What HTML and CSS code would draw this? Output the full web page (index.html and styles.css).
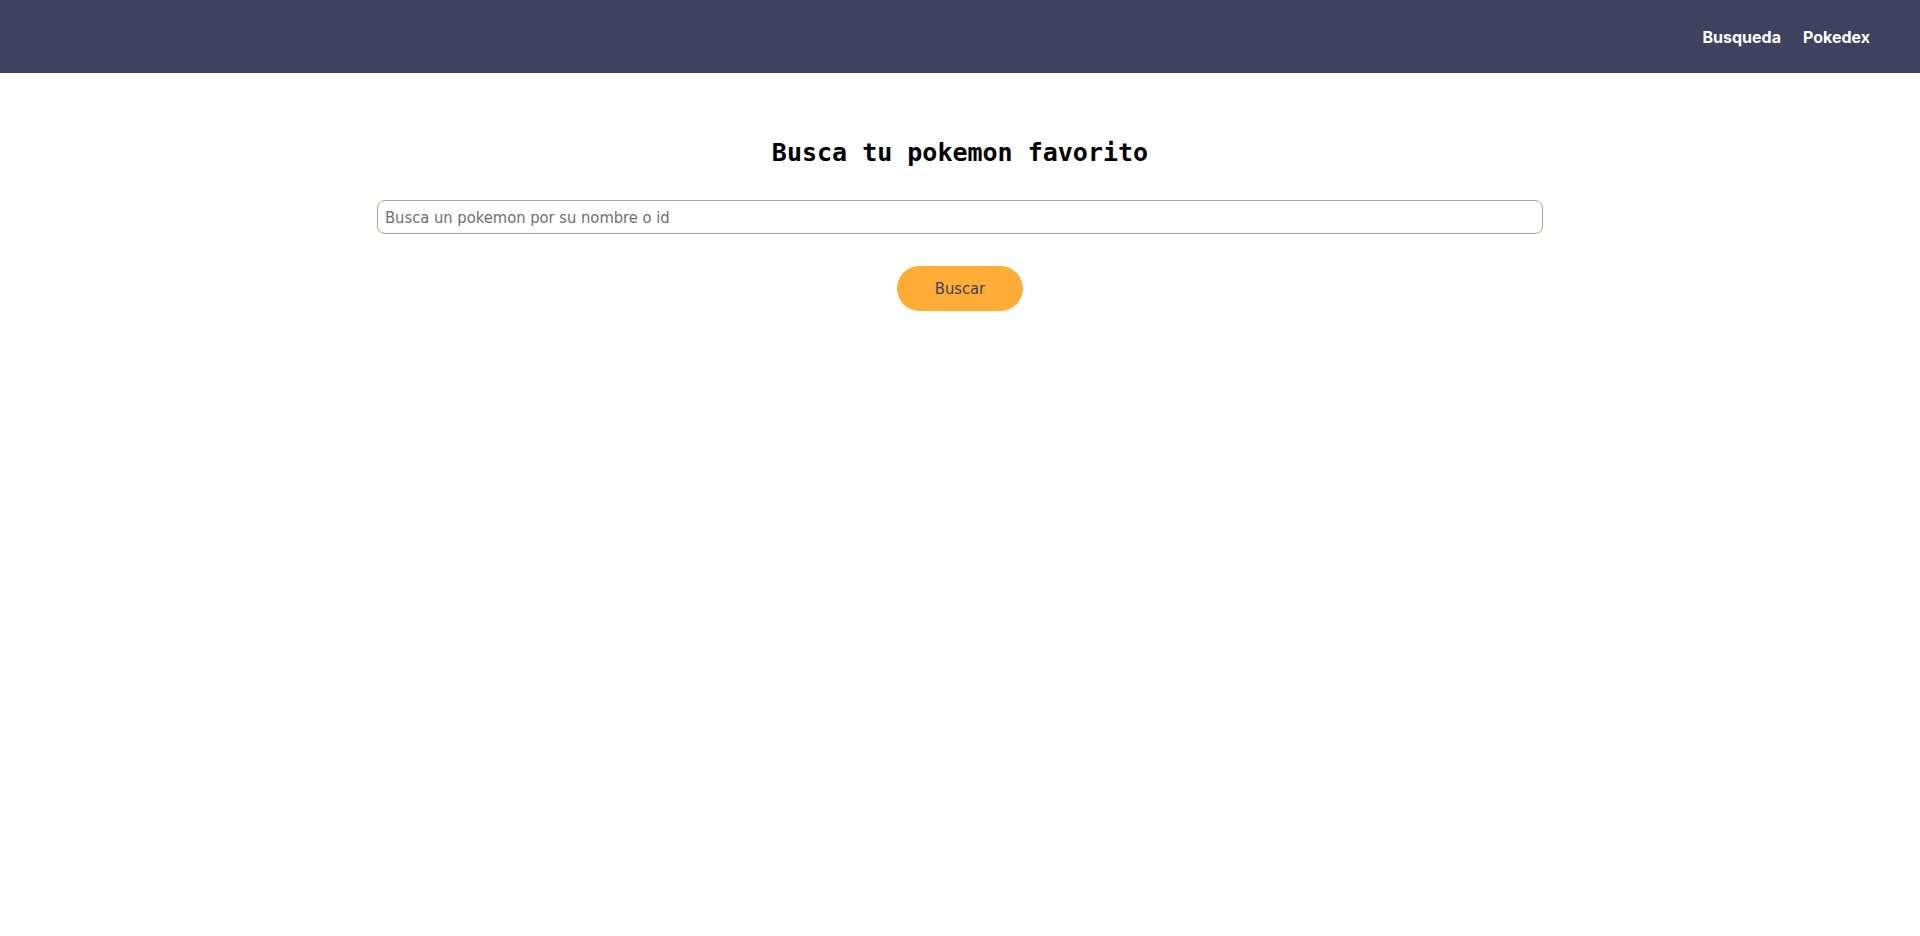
FILE: index.html
```html
<!DOCTYPE html>
<html lang="es">
<head>
<meta charset="utf-8">
<title>Pokedex</title>
<link rel="stylesheet" href="styles.css">
</head>
<body>
<header class="topbar">
  <nav class="nav">
    <a class="nav-link" href="#">Busqueda</a>
    <a class="nav-link" href="#">Pokedex</a>
  </nav>
</header>
<main class="search">
  <h1 class="search-title">Busca tu pokemon favorito</h1>
  <input class="search-input" type="text" placeholder="Busca un pokemon por su nombre o id">
  <button class="search-button" type="button">Buscar</button>
</main>
</body>
</html>
```
FILE: styles.css
```css
* { box-sizing: border-box; }
html, body { margin: 0; padding: 0; background: #ffffff; }
body { font-family: "DejaVu Sans", sans-serif; }

.topbar {
  height: 73px;
  background: #3d425e;
  display: flex;
  justify-content: flex-end;
  align-items: center;
  padding-right: 50px;
}
.nav { display: flex; gap: 22px; }
.nav-link {
  color: #ffffff;
  text-decoration: none;
  font-family: Inter, "Open Sans", sans-serif;
  font-weight: 700;
  font-size: 16px;
}

.search {
  display: flex;
  flex-direction: column;
  align-items: center;
}
.search-title {
  font-family: "DejaVu Sans Mono", monospace;
  font-weight: 700;
  font-size: 25px;
  margin: 65px 0 33px;
  color: #000;
}
.search-input {
  width: 1166px;
  height: 34px;
  border: 1px solid #9aac94;
  border-radius: 8px;
  padding: 0 7px;
  font-family: "DejaVu Sans Condensed", "DejaVu Sans", sans-serif;
  font-size: 16.4px;
  color: #333;
  outline: none;
}
.search-input::placeholder { color: #6f6f6f; }
.search-button {
  margin-top: 32px;
  width: 126px;
  height: 45px;
  border: none;
  border-radius: 23px;
  background: #ffad36;
  color: #3d425e;
  font-family: "DejaVu Sans Condensed", "DejaVu Sans", sans-serif;
  font-size: 16.4px;
  cursor: pointer;
}
```
